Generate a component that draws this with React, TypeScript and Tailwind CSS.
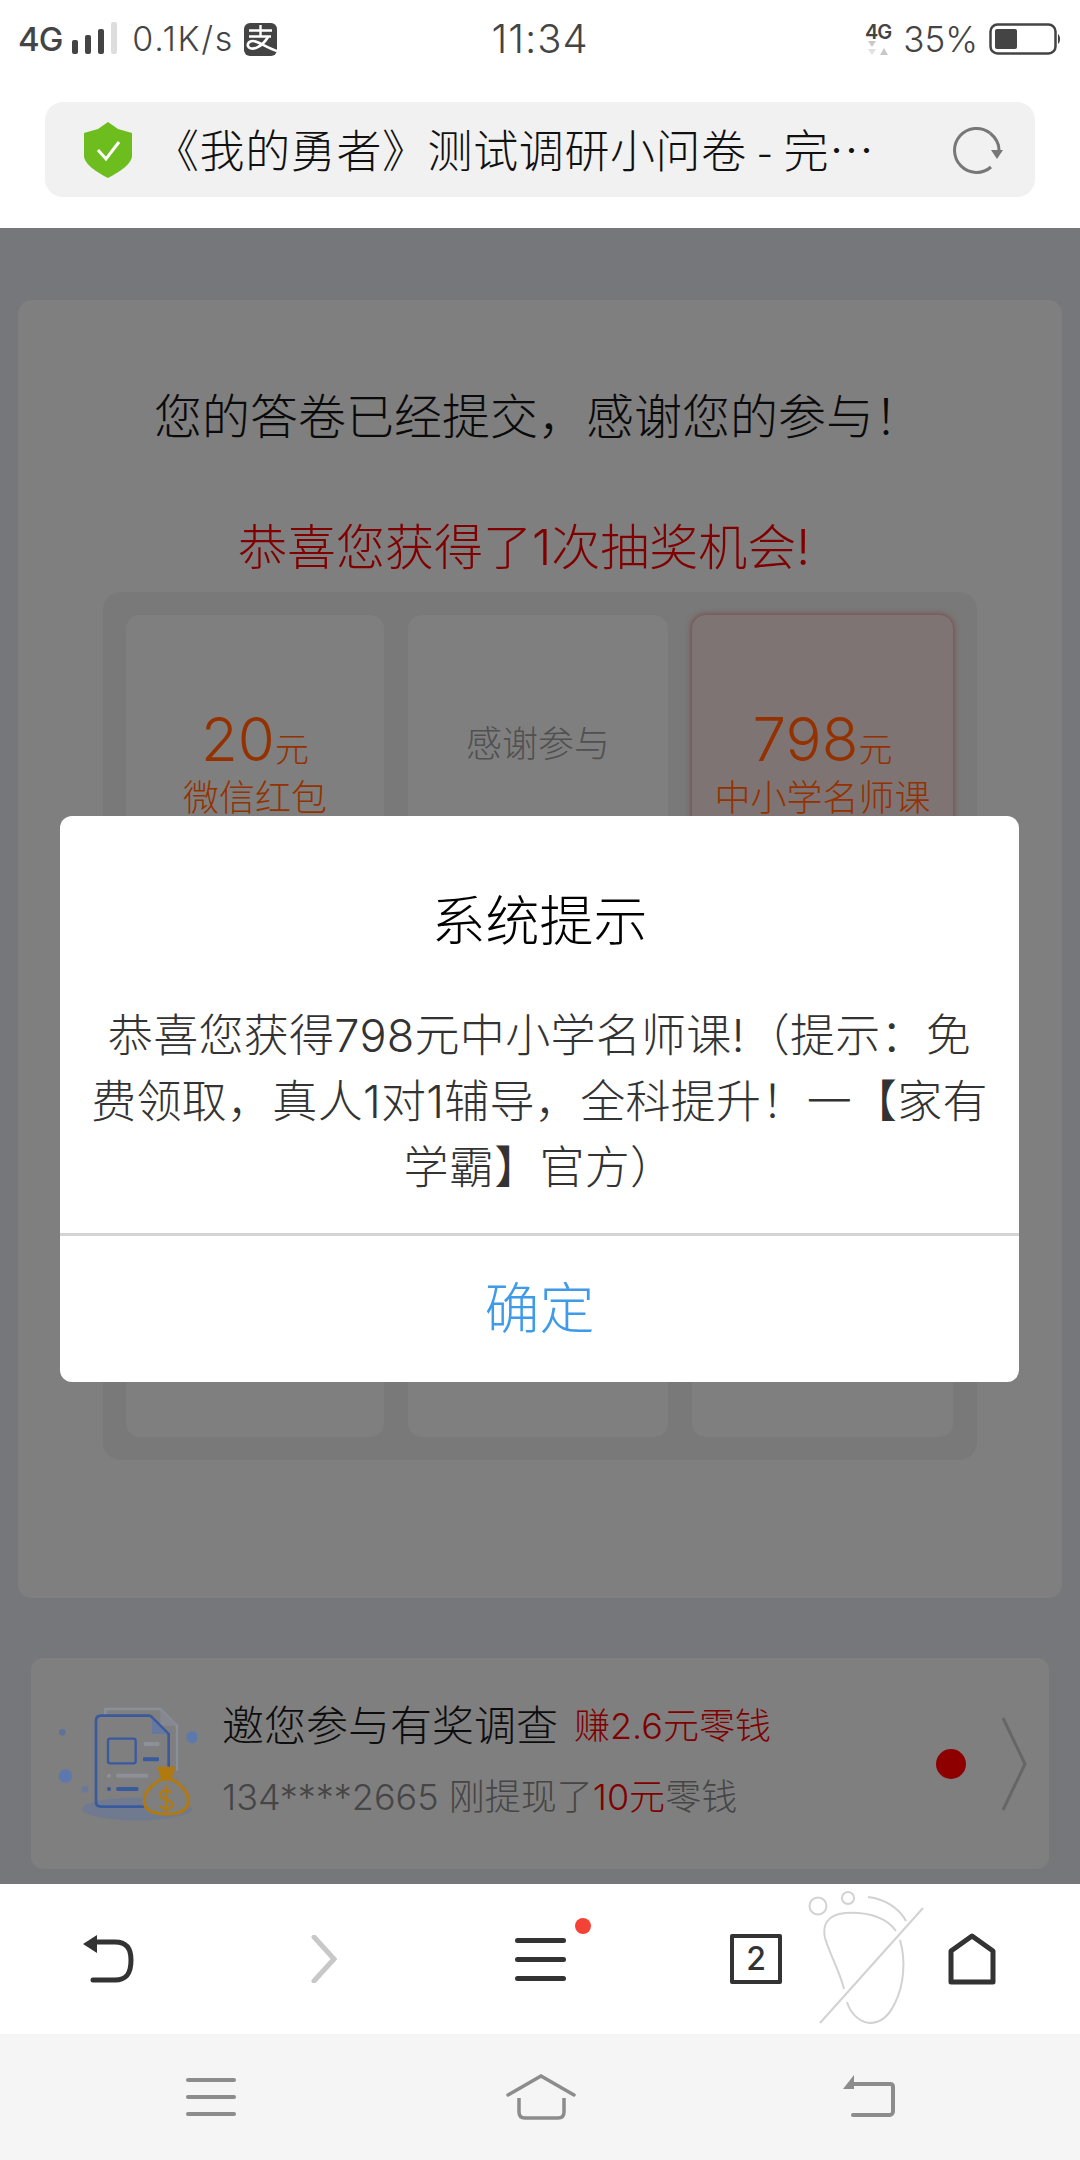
import React from 'react';

function StatusBar() {
  return (
    <div className="grid h-[76px] grid-cols-[1fr_auto_1fr] items-center pt-[2px] text-[#444] font-['Inter','Noto_Sans_CJK_SC',sans-serif]">
      <div className="flex items-center pl-[18px]">
        <span className="text-[33px] leading-none font-medium tracking-[-1px]">4G</span>
        <svg className="ml-[9px]" width="46" height="34" viewBox="0 0 46 34">
          <rect x="1" y="18" width="6" height="14" rx="2" fill="#444" />
          <rect x="14" y="13" width="6" height="19" rx="2" fill="#444" />
          <rect x="27" y="7" width="6" height="25" rx="2" fill="#444" />
          <rect x="40" y="0" width="6" height="32" rx="2" fill="#ddd" />
        </svg>
        <span className="ml-[15px] text-[34px] leading-none font-light tracking-[1.7px]">0.1K/s</span>
        {/* alipay logo */}
        <svg className="ml-[10px]" width="33" height="33" viewBox="0 0 33 33">
          <rect width="33" height="33" rx="6" fill="#444" />
          <path d="M5 7.5 H28 M16.5 2 V13.5 M5 13.5 H27" fill="none" stroke="#fff" strokeWidth="2.4" />
          <path d="M33 28 C23 25 14 18 9 18 C4 18 2.5 22 5 24.5 C9 27.5 18 24 24 14" fill="none" stroke="#fff" strokeWidth="2.6" />
        </svg>
      </div>
      <span className="text-[40px] leading-none font-light tracking-[1px]">11:34</span>
      <div className="flex items-center justify-end pr-[20px]">
        <div className="flex flex-col items-center">
          <span className="text-[20px] leading-[18px] font-semibold tracking-[-1px]">4G</span>
          <svg width="22" height="14" viewBox="0 0 22 14">
            <path d="M1 0h8l-4 6zM13 14h8l-4-7z" fill="#c9c9c9" />
            <path d="M1 8h8l-4 6z" fill="#e2e2e2" />
          </svg>
        </div>
        <span className="ml-[12px] text-[35px] leading-none font-light">35%</span>
        <svg className="ml-[11px]" width="71" height="32" viewBox="0 0 71 32">
          <rect x="1.5" y="1.5" width="65" height="29" rx="7" fill="none" stroke="#444" strokeWidth="2.5" />
          <rect x="6" y="6" width="22" height="20" rx="2" fill="#444" />
          <path d="M69 11c1.5 1 2 3 2 5s-.5 4-2 5z" fill="#444" />
        </svg>
      </div>
    </div>
  );
}

function AddressBar() {
  return (
    <div className="px-[45px] pt-[26px] pb-[31px]">
      <div className="flex h-[95px] items-center rounded-[18px] bg-[#f1f1f1] pl-[39px]">
        <svg width="48" height="56" viewBox="0 0 48 56">
          <path d="M24 0 L34 7 L48 11 V34 C48 42 34 51 24 56 C14 51 0 42 0 34 V11 L14 7 Z" fill="#6dbd1f" />
          <path d="M14 28 L22 37 L35 20" fill="none" stroke="#fff" strokeWidth="3" />
        </svg>
        <span className="ml-[22px] w-[799px] pb-[2px] text-[45px] leading-none font-light tracking-[0.6px] whitespace-nowrap text-[#111] font-['Noto_Sans_CJK_SC',sans-serif]">
          《我的勇者》测试调研小问卷 - 完…
        </span>
        <svg width="50" height="48" viewBox="0 0 50 48">
          <path d="M37 7 A22 22 0 1 0 38 41" fill="none" stroke="#777" strokeWidth="3" />
          <path d="M37 7 C43 12 46 18 46 24" fill="none" stroke="#777" strokeWidth="3" />
          <path d="M38 24 H50 L44 33 Z" fill="#777" />
        </svg>
      </div>
    </div>
  );
}

function PrizeGrid() {
  const cell = 'h-[258px] rounded-[14px] bg-[#7f7f7f]';
  return (
    <div className="mx-[85px] mt-[15px] rounded-[18px] bg-[#797979] p-[23px]">
      <div className="grid grid-cols-[258px_260px_261px] gap-x-[24px] gap-y-[24px]">
        <div className={`${cell} flex flex-col items-center pt-[94px] text-[#933200]`}>
          <div className="flex h-[60px] items-end">
            <span className="text-[60px] leading-[60px] font-light">20</span>
            <span className="mb-[2px] text-[34px] leading-none font-light">元</span>
          </div>
          <span className="mt-[7px] text-[36px] leading-[44px] font-light">微信红包</span>
        </div>
        <div className={`${cell} flex items-start justify-center pt-[107px] text-[36px] leading-[44px] font-light text-[#505050]`}>
          感谢参与
        </div>
        <div className="flex h-[258px] flex-col items-center rounded-[14px] bg-[#7f7474] pt-[94px] text-[#933200] shadow-[0_0_6px_#7a3a3a]">
          <div className="flex h-[60px] items-end">
            <span className="text-[60px] leading-[60px] font-light">798</span>
            <span className="mb-[2px] text-[34px] leading-none font-light">元</span>
          </div>
          <span className="mt-[7px] text-[36px] leading-[44px] font-light">中小学名师课</span>
        </div>
        <div className={cell} />
        <div className={cell} />
        <div className={cell} />
        <div className={cell} />
        <div className={cell} />
        <div className={cell} />
      </div>
    </div>
  );
}

function SurveyArt() {
  return (
    <svg width="140" height="120" viewBox="80 100 420 360" className="shrink-0">
      <ellipse cx="320" cy="415" rx="165" ry="34" fill="#6f7a90" />
      <path d="M225 135 V115 H390 L440 165 V300" fill="none" stroke="#8b8f99" strokeWidth="7" />
      <path d="M390 115 V165 H440" fill="#858891" />
      <circle cx="96" cy="185" r="10" fill="#5f7297" />
      <circle cx="486" cy="200" r="18" fill="#5c78ad" />
      <circle cx="105" cy="316" r="20" fill="#5c78ad" />
      <circle cx="164" cy="356" r="10" fill="#68799a" />
      <path d="M360 135 H212 Q197 135 197 150 V395 Q197 408 212 408 H360" fill="none" stroke="#3a5a9e" strokeWidth="8" />
      <path d="M360 135 L415 190 V300" fill="none" stroke="#3a5a9e" strokeWidth="8" />
      <path d="M365 145 L410 190 H365 Z" fill="#66789f" />
      <rect x="233" y="204" width="83" height="74" rx="6" fill="none" stroke="#3a5a9e" strokeWidth="7" />
      <rect x="340" y="214" width="48" height="12" rx="4" fill="#8d9098" />
      <rect x="338" y="260" width="48" height="12" rx="4" fill="#3a5a9e" />
      <circle cx="236" cy="315" r="6" fill="#8d9098" />
      <rect x="258" y="309" width="96" height="12" rx="4" fill="#8d9098" />
      <circle cx="236" cy="355" r="6" fill="#3a5a9e" />
      <rect x="258" y="349" width="66" height="12" rx="4" fill="#3a5a9e" />
      <path d="M380 288 H436 L424 322 H392 Z" fill="#b27a0e" />
      <path d="M392 326 C360 345 340 370 342 395 C344 420 365 430 408 430 C450 430 472 420 474 395 C476 370 456 345 424 326 Z" fill="#7f7f7f" stroke="#b27a0e" strokeWidth="9" />
      <path d="M424 366 C416 356 390 358 390 372 C390 392 426 382 426 402 C426 416 398 418 388 406 M407 344 V424" fill="none" stroke="#b27a0e" strokeWidth="7" />
    </svg>
  );
}

function SurveyCard() {
  return (
    <div className="mx-[31px] mt-[60px] flex h-[211px] items-center rounded-[12px] bg-[#7f7f7f] pl-[26px]">
      <SurveyArt />
      <div className="ml-[25px] flex flex-col pb-[4px]">
        <div className="flex items-center whitespace-nowrap">
          <span className="text-[42px] leading-[46px] font-light text-[#0d0d0d]">邀您参与有奖调查</span>
          <span className="ml-[16px] text-[36px] leading-[46px] font-light text-[#800000]">赚2.6元零钱</span>
        </div>
        <div className="mt-[25px] text-[36px] leading-[46px] font-light whitespace-nowrap text-[#454545]">
          134****2665 刚提现了<span className="text-[#800000]">10元</span>零钱
        </div>
      </div>
      <div className="ml-auto flex items-center pr-[22px]">
        <span className="h-[30px] w-[30px] rounded-full bg-[#8e0000]" />
        <svg className="ml-[35px]" width="26" height="96" viewBox="0 0 26 96">
          <path d="M2 2 L24 48 L2 94" fill="none" stroke="#666" strokeWidth="3" />
        </svg>
      </div>
    </div>
  );
}

function Dialog() {
  return (
    <div className="absolute top-[816px] left-[60px] flex h-[566px] w-[959px] flex-col rounded-[12px] bg-white">
      <div className="pt-[76px] text-center text-[54px] leading-[60px] font-light text-black">系统提示</div>
      <div className="mt-[51px] h-[198px] text-center text-[45px] leading-[66px] font-light tracking-[0.3px] text-[#333]">
        恭喜您获得798元中小学名师课!（提示：免
        <br />
        费领取，真人1对1辅导，全科提升！一【家有
        <br />
        学霸】官方）
      </div>
      <div className="mt-[32px] h-[3px] bg-[#d4d4d4]" />
      <div className="flex flex-1 items-center justify-center pb-[2px] text-[55px] leading-none font-light text-[#3f9be8]">确定</div>
    </div>
  );
}

function BrowserToolbar() {
  return (
    <div className="relative flex h-[150px] items-center bg-white">
      <div className="grid w-full grid-cols-[1fr_1fr_1fr_1fr_1fr] items-center">
        <div className="flex justify-center">
          <svg width="54" height="48" viewBox="0 0 54 48">
            <path d="M14 7 H34 C46 7 50 14 50 25 C50 38 46 45 34 45 H12" fill="none" stroke="#333" strokeWidth="5" strokeLinecap="round" />
            <path d="M16 0 V18 L2 9 Z" fill="#333" />
          </svg>
        </div>
        <div className="flex justify-center">
          <svg width="26" height="48" viewBox="0 0 26 48">
            <path d="M3 2 L23 24 L3 46" fill="none" stroke="#c8c8c8" strokeWidth="5" strokeLinecap="round" />
          </svg>
        </div>
        <div className="relative flex justify-center">
          <div className="flex w-[51px] flex-col gap-[14px]">
            <span className="h-[5px] rounded-full bg-[#333]" />
            <span className="h-[5px] rounded-full bg-[#333]" />
            <span className="h-[5px] rounded-full bg-[#333]" />
          </div>
          <span className="absolute top-[-20px] left-[143px] h-[16px] w-[16px] rounded-full bg-[#f44336]" />
        </div>
        <div className="flex justify-center">
          <span className="flex h-[50px] w-[52px] items-center justify-center rounded-[2px] border-[4px] border-[#333] text-[32px] leading-none font-medium text-[#333]">
            2
          </span>
        </div>
        <div className="flex justify-center">
          <svg width="48" height="52" viewBox="0 0 48 52">
            <path d="M24 3 L45 18 V49 H3 V18 Z" fill="none" stroke="#333" strokeWidth="5" strokeLinejoin="round" />
          </svg>
        </div>
      </div>
      {/* watermark over the toolbar */}
      <svg className="absolute top-[6px] left-[800px]" width="130" height="150" viewBox="800 1890 130 150">
        <g fill="none" stroke="#d2d2d2" strokeWidth="2">
          <circle cx="818" cy="1906" r="8.5" />
          <circle cx="848" cy="1898" r="6" />
          <path d="M868 1897 C885 1899 899 1908 906 1921" />
          <path d="M896 1931 C885 1916 865 1912 845 1913 C828 1915 822 1924 825 1938 C830 1955 840 1972 844 1989" />
          <path d="M900 1940 C906 1960 904 1985 895 2003 C888 2018 880 2023 870 2023 C858 2022 850 2012 847 2002" />
          <path d="M923 1908 L820 2023" />
        </g>
      </svg>
    </div>
  );
}

function SystemNav() {
  return (
    <div className="relative h-[126px] bg-[#f5f5f5]">
      <div className="absolute top-[44px] left-[186px] flex w-[50px] flex-col gap-[13px]">
        <span className="h-[4px] rounded-full bg-[#8c8c8c]" />
        <span className="h-[4px] rounded-full bg-[#8c8c8c]" />
        <span className="h-[4px] rounded-full bg-[#8c8c8c]" />
      </div>
      <svg className="absolute top-[40px] left-[506px]" width="70" height="46" viewBox="0 0 70 46">
        <path d="M2 21 L35 2 L68 21" fill="none" stroke="#8c8c8c" strokeWidth="3.5" strokeLinecap="round" />
        <path d="M13 24 V38 C13 42 15 44 19 44 H52 C56 44 58 42 58 38 V24" fill="none" stroke="#8c8c8c" strokeWidth="3.5" />
      </svg>
      <svg className="absolute top-[40px] left-[842px]" width="54" height="44" viewBox="0 0 54 44">
        <path d="M12 10 H48 C50 10 51 11 51 13 V37 C51 39 50 41 48 41 H11" fill="none" stroke="#8c8c8c" strokeWidth="4" strokeLinecap="round" />
        <path d="M12 1 V15 H1 Z" fill="#8c8c8c" />
      </svg>
    </div>
  );
}

export default function App() {
  return (
    <div className="relative h-[2160px] w-[1080px] overflow-hidden bg-white font-['Inter','Noto_Sans_CJK_SC',sans-serif]">
      <StatusBar />
      <AddressBar />
      <main className="h-[1656px] bg-[#76777b] pt-[72px]">
        <section className="mx-[18px] h-[1298px] rounded-[14px] bg-[#7f7f7f]">
          <h1 className="pt-[88px] pr-[4px] text-center text-[48px] leading-[58px] font-light text-[#0a0a0a]">
            您的答卷已经提交，感谢您的参与！
          </h1>
          <p className="mt-[73px] pr-[32px] text-center text-[49px] leading-[58px] font-light text-[#800000]">
            恭喜您获得了1次抽奖机会!
          </p>
          <PrizeGrid />
        </section>
        <SurveyCard />
      </main>
      <BrowserToolbar />
      <SystemNav />
      <Dialog />
    </div>
  );
}
